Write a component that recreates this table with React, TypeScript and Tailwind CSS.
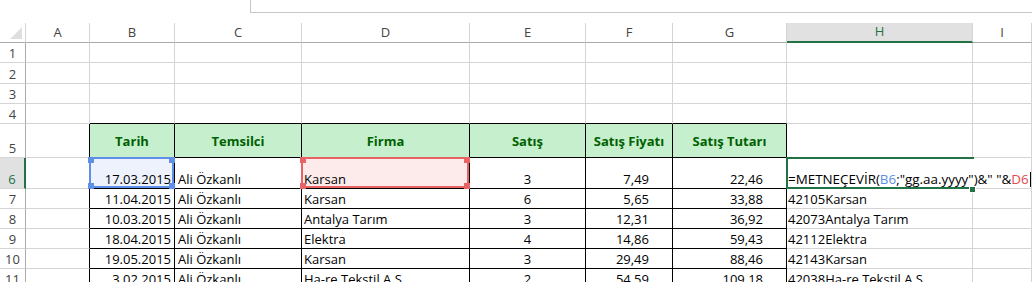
import React from 'react';

const COLS = ['A', 'B', 'C', 'D', 'E', 'F', 'G', 'H', 'I'];

const HEADERS = ['Tarih', 'Temsilci', 'Firma', 'Satış', 'Satış Fiyatı', 'Satış Tutarı'];

const DATA = [
  ['17.03.2015', 'Ali Özkanlı', 'Karsan', '3', '7,49', '22,46', ''],
  ['11.04.2015', 'Ali Özkanlı', 'Karsan', '6', '5,65', '33,88', '42105Karsan'],
  ['10.03.2015', 'Ali Özkanlı', 'Antalya Tarım', '3', '12,31', '36,92', '42073Antalya Tarım'],
  ['18.04.2015', 'Ali Özkanlı', 'Elektra', '4', '14,86', '59,43', '42112Elektra'],
  ['19.05.2015', 'Ali Özkanlı', 'Karsan', '3', '29,49', '88,46', '42143Karsan'],
  ['3.02.2015', 'Ali Özkanlı', 'Ha-re Tekstil A.Ş.', '2', '54,59', '109,18', '42038Ha-re Tekstil A.Ş.'],
];

// text alignment per data column (B..H)
const ALIGN = [
  'justify-end pr-[3px]',
  'justify-start pl-[3px]',
  'justify-start pl-[2px]',
  'justify-center',
  'justify-end pr-[23px]',
  'justify-end pr-[23px]',
  'justify-start pl-[1px]',
];

const Formula = () => (
  <span className="relative z-10 whitespace-nowrap bg-white text-[13.4px]">
    =METNEÇEVİR(<span className="text-[#5b8ee6]">B6</span>;"gg.aa.yyyy")&amp;" "&amp;
    <span className="text-[#e24b4b]">D6</span>
    <span className="inline-block w-px h-[15px] ml-px bg-black align-[-3px]"></span>
  </span>
);

const Handle = ({ cls }: { cls: string }) => <div className={`absolute w-[6px] h-[6px] ${cls}`}></div>;

function Cell({ r, c }: { r: number; c: number }) {
  // r: 1..11, c: 0..8 (A..I)
  const inTable = r >= 5 && r <= 11;
  const rightBlack = c <= 6 && inTable;
  const bottomBlack = c >= 1 && c <= 6 && r >= 4;
  let right = rightBlack ? 'border-r-black' : 'border-r-[#d4d4d4]';
  if (r === 6 && c === 7) right = 'border-r-transparent';
  const bottom = bottomBlack ? 'border-b-black' : 'border-b-[#d4d4d4]';
  let bg = 'bg-white';
  let content: React.ReactNode = null;
  let align = 'items-end';
  let extra = '';
  let overlay: React.ReactNode = null;

  if (r === 5 && c >= 1 && c <= 6) {
    bg = 'bg-[#c6efce]';
    content = HEADERS[c - 1];
    align = 'items-center justify-center pt-[2px]';
    extra = 'font-bold text-[#006100]';
  } else if (r >= 6 && c >= 1 && c <= 7) {
    const row = DATA[r - 6];
    align = `items-end ${ALIGN[c - 1]}`;
    content = r === 6 && c === 7 ? <Formula /> : row[c - 1];
    if (r === 6 && c === 1) {
      bg = 'bg-[#edf2fc]';
      overlay = (
        <div className="absolute -left-px -top-px right-0 bottom-0 border-2 border-[#5f8fe6] pointer-events-none">
          <Handle cls="-left-[3px] -top-[2px] bg-[#5f8fe6]" />
          <Handle cls="-right-[3px] -top-[2px] bg-[#5f8fe6]" />
          <Handle cls="-left-[3px] -bottom-[3px] bg-[#5f8fe6]" />
          <Handle cls="-right-[3px] -bottom-[3px] bg-[#5f8fe6]" />
        </div>
      );
    }
    if (r === 6 && c === 3) {
      bg = 'bg-[#fdeaea]';
      overlay = (
        <div className="absolute -left-px -top-px right-0 bottom-0 border-2 border-[#e86464] pointer-events-none">
          <Handle cls="-left-[3px] -top-[2px] bg-[#e86464]" />
          <Handle cls="-right-[3px] -top-[2px] bg-[#e86464]" />
          <Handle cls="-left-[3px] -bottom-[3px] bg-[#e86464]" />
          <Handle cls="-right-[3px] -bottom-[3px] bg-[#e86464]" />
        </div>
      );
    }
    if (r === 6 && c === 7) {
      overlay = (
        <div className="absolute -left-px -top-px w-[188px] h-[32px] border-t-2 border-l-2 border-b-2 border-[#217346] pointer-events-none z-20">
          <div className="absolute left-[181px] top-[27px] w-[7px] h-[7px] bg-[#217346] border border-white"></div>
        </div>
      );
    }
  }

  return (
    <div className={`relative flex overflow-visible border-r border-b ${right} ${bottom} ${bg} ${align} ${extra}`}>
      <span className="leading-[17px] whitespace-nowrap">{content}</span>
      {overlay}
    </div>
  );
}

export default function App() {
  const rows = [1, 2, 3, 4, 5, 6, 7, 8, 9, 10, 11];
  return (
    <div className="w-[1032px] h-[282px] overflow-hidden bg-white text-[13px] text-black font-['Open_Sans',sans-serif]">
      {/* formula bar edge */}
      <div className="h-[23px]">
        <div className="ml-[250px] h-[13px] border-l border-b border-[#c6c6c6]"></div>
      </div>

      <div className="grid grid-cols-[26px_64px_85px_127px_168px_116px_87px_114px_186px_1fr] grid-rows-[20px_20px_21px_20px_20px_34px_31px_20px_20px_20px_20px_20px]">
        {/* column headers */}
        <div className="relative border-r border-b border-r-[#d4d4d4] border-b-[#ababab]">
          <svg className="absolute left-[10px] top-[4px]" width="13" height="13" viewBox="0 0 13 13">
            <polygon points="12,0 12,12 0,12" fill="#dfdfdf" />
          </svg>
        </div>
        {COLS.map((l) => (
          <div
            key={l}
            className={
              l === 'H'
                ? 'flex items-center justify-center bg-[#e1e1e1] text-[#217346] border-r border-r-[#d4d4d4] border-b-2 border-b-[#217346]'
                : 'flex items-center justify-center text-[#444] border-r border-b border-r-[#d4d4d4] border-b-[#ababab]'
            }
          >
            {l}
          </div>
        ))}

        {rows.map((r) => (
          <React.Fragment key={r}>
            <div
              className={
                r === 6
                  ? 'flex items-end justify-center bg-[#e1e1e1] text-[#217346] border-r-2 border-b border-r-[#217346] border-b-[#d4d4d4]'
                  : 'flex items-end justify-center text-[#444] border-r border-b border-r-[#ababab] border-b-[#d4d4d4]'
              }
            >
              <span className="leading-[17px]">{r}</span>
            </div>
            {COLS.map((_, c) => (
              <Cell key={c} r={r} c={c} />
            ))}
          </React.Fragment>
        ))}
      </div>
    </div>
  );
}
